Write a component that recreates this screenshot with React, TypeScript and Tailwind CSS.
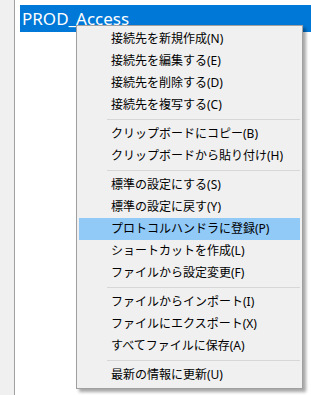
import React from "react";

type Entry = { label: string; active?: boolean } | "sep";

const MENU: Entry[] = [
  { label: "接続先を新規作成(N)" },
  { label: "接続先を編集する(E)" },
  { label: "接続先を削除する(D)" },
  { label: "接続先を複写する(C)" },
  "sep",
  { label: "クリップボードにコピー(B)" },
  { label: "クリップボードから貼り付け(H)" },
  "sep",
  { label: "標準の設定にする(S)" },
  { label: "標準の設定に戻す(Y)" },
  { label: "プロトコルハンドラに登録(P)", active: true },
  { label: "ショートカットを作成(L)" },
  { label: "ファイルから設定変更(F)" },
  "sep",
  { label: "ファイルからインポート(I)" },
  { label: "ファイルにエクスポート(X)" },
  { label: "すべてファイルに保存(A)" },
  "sep",
  { label: "最新の情報に更新(U)" },
];

function ContextMenu() {
  return (
    <div className="absolute left-[76px] top-[25px] w-[227px] border border-[#a0a0a0] bg-[#f0f0f0] py-[2px] px-[2px] shadow-[3px_3px_3px_rgba(0,0,0,0.35)]">
      {MENU.map((item, i) =>
        item === "sep" ? (
          <div key={i} className="flex h-[7px] items-center pl-[28px]">
            <div className="h-px w-full bg-[#d7d7d7]" />
          </div>
        ) : (
          <div
            key={i}
            className={`flex h-[22px] items-center pl-[32px] text-[12px] text-black ${
              item.active ? "bg-[#91c9f7]" : ""
            }`}
          >
            {item.label}
          </div>
        )
      )}
    </div>
  );
}

export default function App() {
  return (
    <div
      className="relative flex h-[395px] w-[311px] overflow-hidden bg-white"
      style={{ fontFamily: '"Noto Sans", "Noto Sans CJK JP", sans-serif' }}
    >
      <div className="w-[15px] shrink-0 border-r border-[#a0a0a0] bg-[#f0f0f0]" />
      <div className="flex-1 pl-[5px] pt-[5px]">
        <div className="flex h-[27px] items-center bg-[#0078d7] pl-[2px] text-[17px] text-white">
          PROD_Access
        </div>
      </div>
      <ContextMenu />
    </div>
  );
}
